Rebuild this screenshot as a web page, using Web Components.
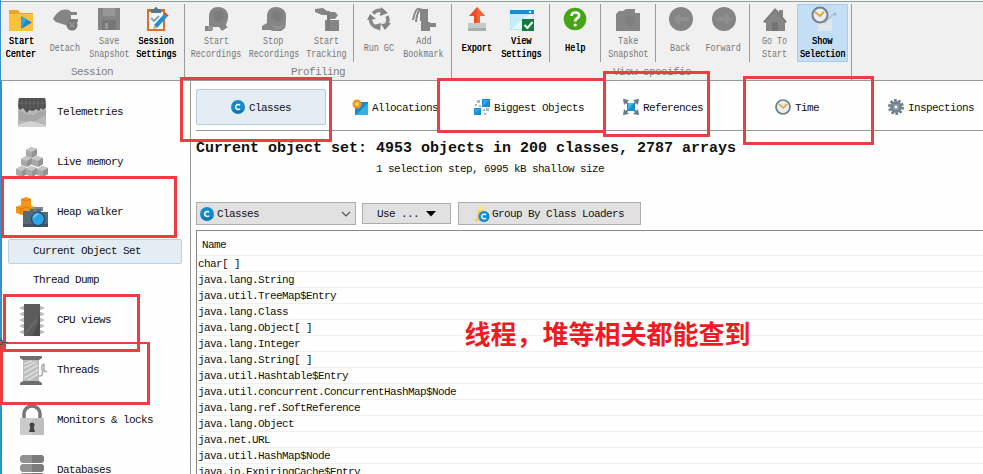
<!DOCTYPE html>
<html lang="en">
<head>
<meta charset="utf-8">
<title>Heap walker</title>
<style>
html,body{margin:0;height:474px;overflow:hidden;background:#fff}
body{font-family:"Liberation Mono",monospace;font-size:11px;letter-spacing:-.6px;color:#111}
</style>
</head>
<body>
<profiler-app></profiler-app>
<script>
const ICONS = {
folder:'<path d="M0 3h9l2 3h13v18H0z" fill="#e9a625"/><path d="M0 7h24v17H0z" fill="#fbc23c"/><path d="M12 9l11 6.5L12 22z" fill="#2484c9"/><path d="M12 9l5.5 3.2L12 22z" fill="#36a5df"/>',
detach:'<path d="M0 12c4-8 10-11 16-9l2 2h6v3h-6v4h7v3h-6l-3 4-7-2-6-2z" fill="#858585"/><circle cx="19" cy="18" r="5.5" fill="#777"/><path d="M16.500 15.500l5 5M21.500 15.500l-5 5" stroke="#999" stroke-width="1.500"/>',
save:'<path d="M1 1h22v22H1z" fill="#858585"/><path d="M6 1h12v8H6z" fill="#979797"/><path d="M5 13h14v10H5z" fill="#777"/><path d="M8 16h3v6H8z" fill="#999"/>',
settings:'<path d="M3 2h18v22H3z" fill="#d5702f"/><path d="M5 5h14v17H5z" fill="#f6fbff"/><path d="M7 2h3q2-4 4 0h3v4H7z" fill="#557787"/><path d="M7 11l3 3 5-5" stroke="#86a3b0" stroke-width="2" fill="none"/><path d="M10 18L20 7l3 3-10 11z" fill="#1d91d4"/><path d="M20 7l1.500-1.500 3 3L23 10z" fill="#d9413a"/><path d="M9 22l1-4 3 3z" fill="#e3aa5a"/>',
rec:'<path d="M5 10C5 3 9 0 14 0c7 0 11 5 10 11-.4 4-2 5-2 8l2 1-6 4-3-4H9l-1 4H1v-5h4z" fill="#858585"/><circle cx="15" cy="9" r="5.500" fill="#7d7d7d"/><path d="M4 19h5v4H4z" fill="#989898"/>',
stop:'<path d="M5 10C5 3 9 0 14 0c7 0 11 5 10 11-.4 4 0 7-1 10l-4 3h-8l-3-1H0v-4l5-3z" fill="#858585"/><circle cx="15" cy="9" r="5.500" fill="#7d7d7d"/><path d="M9 17q7 4 13 0l-2 5-7 1z" fill="#919191"/>',
track:'<path d="M0 2l8-1 4 3h3v4H7L0 5zM12 5h8l3 3-3 4h-8zM10 13h14v11H10z" fill="#858585"/><path d="M12 6h3v17h-3z" fill="#7b7b7b"/>',
gc:'<g fill="none" stroke="#898989" stroke-width="3.500"><path d="M6 6.500A9 9 0 0 1 16 4M20 9a9 9 0 0 1-2 10M11 21A9 9 0 0 1 3.500 11"/></g><path d="M14 0l7 6-8 3zM24 16l-6 7-4-6zM0 13l3-6 6 5zM7 18l7-2-1 8z" fill="#838383"/>',
bookmark:'<path d="M1 13Q4-2 9 3v11M4 15Q6-2 12 4" fill="none" stroke="#888" stroke-width="2"/><path d="M9 2h7v13h2v1h6v4h-6v4H9z" fill="#858585"/>',
export:'<path d="M3 16h18v8H3z" fill="#c4ccca"/><path d="M3 21h18v3H3z" fill="#a7b0b0"/><path d="M12 0l8 9h-5v7H9V9H4z" fill="#ee4b28"/><path d="M12 0l8 9h-5v7h-3z" fill="#f3653f"/>',
view:'<path d="M0 3h24v20H0z" fill="#b9e6f5"/><path d="M0 3h24v4H0z" fill="#168ed7"/><path d="M19 4h2v2h-2z" fill="#fff"/><path d="M1 8h22v14H1z" fill="#c7edf7"/><path d="M2 22L18 8h5v4L12 22z" fill="#e8f9fd"/><path d="M12 12h12v12H12z" fill="#137c3a"/><path d="M14.500 18l3 3 5-6" fill="none" stroke="#fff" stroke-width="2"/>',
help:'<circle cx="12" cy="12" r="11.300" fill="#46a514"/><path d="M8.500 9q.2-3.500 3.800-3.500c5 0 4.500 4.500 1.500 6-1.500.8-1.600 1.500-1.600 3" fill="none" stroke="#fff" stroke-width="2.700"/><circle cx="12.200" cy="18" r="1.600" fill="#fff"/>',
camera:'<path d="M0 7l3-3h4l3-2h9v4h5v18H0z" fill="#858585"/><circle cx="14" cy="14" r="5.500" fill="#808080"/>',
back:'<circle cx="12" cy="12" r="12" fill="#858585"/><path d="M4 12l7-6v4h9v4h-9v4z" fill="#8f8f8f"/>',
forward:'<circle cx="12" cy="12" r="12" fill="#858585"/><path d="M20 12l-7-6v4H4v4h9v4z" fill="#8f8f8f"/>',
home:'<path d="M0 15L12 1l4 4V3h4v7l4 5-2 1v8H3v-8z" fill="#858585"/><path d="M9 15h6v9H9z" fill="#747474"/><path d="M1 15L12 3l11 12" stroke="#7b7b7b" fill="none" stroke-width="1.500"/>',
show:'<path d="M7 10h14v14H7z" fill="#dfe7eb"/><path d="M13 16L23 7" stroke="#b8cad5" stroke-width="2"/><circle cx="24" cy="7" r="1.500" fill="#9fb9cc"/><circle cx="9" cy="8" r="7.500" fill="#e8eef0" stroke="#71808a" stroke-width="2"/><path d="M4 5l5 4 4-4" fill="none" stroke="#eda12d" stroke-width="1.800"/>',
telem:'<rect width="28" height="29" rx="2" fill="#b8b8b8"/><path d="M1 0h26l1 9-3 3-2-2-2 3-3-2-3 2-4-1-2 3-4-5-3 2-2-3z" fill="#505050"/><path d="M1 13q4 0 6 3 4 0 8 1l5-3 8-2v5L14 25 1 22z" fill="#a7a7a7"/><path d="M4 1v8M8 1v10M12 1v10M16 1v9M20 1v10M24 1v9M1 5h26" stroke="#737373" stroke-width=".7"/><path d="M1 26l12-3 14 4v2H1z" fill="#d3d3d3"/>',
memory:(()=>{let s='';for(const [x,y] of [[10,0],[5,9],[16,9],[0,19],[10,19],[21,19]])s+=`<path d="M${x} ${y+3}l5-3 6 2v6l-5 3-6-2z" fill="#a8a8a8"/><path d="M${x} ${y+3}l5-3 6 2-5 3z" fill="#c6c6c6"/><path d="M${x+6} ${y+5}l5-3v6l-5 3z" fill="#949494"/>`;return s})(),
heap:'<path d="M5 2l5-2 5 2v6l4 3v5l-5 2H6l-6-2v-6l5-2z" fill="#f7941a"/><path d="M5 2l5 2 5-2M0 10l5 2 5-2 5 2 4-2M5 12v5M15 12v5" stroke="#df7c0a" fill="none"/><path d="M7 14h7v-2h11v3h7v15H7z" fill="#526a79"/><path d="M19 14v-3h7v3" fill="none" stroke="#788991" stroke-width="2"/><path d="M7 27h25v3H7z" fill="#3f5360"/><circle cx="22" cy="22" r="7" fill="#23485c"/><circle cx="22" cy="22" r="5.900" fill="#2ba4ea"/><path d="M17.500 21q1-4 5-4" stroke="#69c8ef" stroke-width="2" fill="none"/>',
cpu:'<path d="M0 4l4-2h18l4 2-4 2H4zM0 10l4-2h18l4 2-4 2H4zM0 16l4-2h18l4 2-4 2H4zM0 22l4-2h18l4 2-4 2H4zM0 28l4-2h18l4 2-4 2H4z" fill="#bdbdbd"/><path d="M5 0h16v32H5z" fill="#5c5c5c"/><path d="M21 8v24h-8Q20 21 21 8z" fill="#4b4b4b"/><path d="M6 30L18 15" stroke="#6a6a6a" stroke-width="2"/>',
thread:'<path d="M0 0h22v2l-3 2H3L0 2zM3 25h16l3 2v2H0v-2z" fill="#707070"/><path d="M3 4h16v21H3z" fill="#bdbdbd"/><path d="M4 8l8-3M4 12l12-6M4 17l14-8M4 22l14-8M8 24l10-6" stroke="#dedede" stroke-width="1.500"/><path d="M19 20c8 1-1-11 5-12M24 8v7l3 1" fill="none" stroke="#aaa" stroke-width="1.500"/>',
lock:'<path d="M4 15V9a8 8 0 0 1 16 0v6" fill="none" stroke="#777" stroke-width="3.500"/><path d="M0 13h24v17H0z" fill="#cbcbcb"/><path d="M12 14h12v16H12z" fill="#bfbfbf"/><circle cx="12" cy="20" r="2.500" fill="#454545"/><path d="M11 20h2l2 7H9z" fill="#454545"/>',
db:'<path d="M0 2l2-2h20l2 2v4l-2 2H2L0 6zM0 11l2-2h20l2 2v4l-2 2H2l-2-2zM0 20l2-2h20l2 2v8H0z" fill="#929292"/><path d="M12 0h10l2 2v4l-2 2H12zM12 9h10l2 2v4l-2 2H12zM12 18h10l2 2v8H12z" fill="#7c7c7c"/>',
c:'<circle cx="8" cy="8" r="7" fill="#118dce"/><path d="M2 11a7 7 0 0 0 12 0" fill="#0c79b9"/><path d="M10 6.300a2.500 2.500 0 1 0 0 3.400" fill="none" stroke="#fff" stroke-width="1.600"/>',
alloc:'<path d="M3 3h13v13H3z" fill="#158dcf"/><path d="M4 16L16 4v12z" fill="#36afe5"/><circle cx="5" cy="5" r="4.500" fill="#e79921"/><circle cx="5" cy="5" r="2" fill="#ffcf73"/>',
big:'<path d="M8 0h8v8H8zM0 9h7v7H0z" fill="#148cce"/><path d="M9 1h6L9 7zM1 10h5l-5 5z" fill="#2ca9e1"/><path d="M3 1h3v3H3zM1 5h2v2H1zM5 6h2v2H5zM9 10h2v2H9zM12 9h3v3h-3zM10 14h2v2h-2z" fill="#a8b6bd"/>',
refs:'<path d="M1 1l14 14M15 1L1 15" stroke="#536773" stroke-width="1.700"/><path d="M0 0l6 1-5 5zM16 0l-1 6-5-5zM0 16l1-6 5 5zM16 16l-6-1 5-5z" fill="#667b87"/><path d="M4 4h8v8H4z" fill="#188fcd"/><path d="M5 4h6L5 11z" fill="#42b6e4"/>',
time:'<circle cx="8" cy="8" r="7" fill="#e8eff1" stroke="#6d7d86" stroke-width="1.700"/><path d="M4 5l4.500 4L12 5" fill="none" stroke="#e79d35" stroke-width="1.500"/>',
gear:'<circle cx="8" cy="8" r="6.700" fill="none" stroke="#6c7f8b" stroke-width="2.600" stroke-dasharray="2.600 1.610"/><circle cx="8" cy="8" r="4.500" fill="#b9c6cd" stroke="#6f828e" stroke-width="2.800"/><circle cx="8" cy="8" r="2.200" fill="#fff" stroke="#526470"/>',
loader:'<path d="M5 0h8q-2 2-2 6v9H1q3-2 3-5z" fill="#f5cf60"/><path d="M5 0h8l-2 4H5z" fill="#fbe399"/><circle cx="11" cy="10.500" r="5.500" fill="#168bce"/><path d="M13 9a2.400 2.400 0 1 0 0 3" fill="none" stroke="#fff" stroke-width="1.400"/>'
};
function define(name, render){
  customElements.define(name, class extends HTMLElement{
    constructor(){super();this.attachShadow({mode:'open'});}
    connectedCallback(){const a=n=>this.getAttribute(n)||'';this.shadowRoot.innerHTML=render(a);}
  });
}
define('ui-icon',a=>`<style>:host{display:block;flex:none;width:${a('w')||16}px;height:${a('h')||a('w')||16}px}svg{display:block;overflow:visible}</style><svg width="${a('w')||16}" height="${a('h')||a('w')||16}">${ICONS[a('name')]}</svg>`);

define('tool-button',a=>`<style>
:host{display:flex;flex-direction:column;align-items:center;flex:none;box-sizing:border-box;width:${a('w')}px;height:58px;padding-top:3px;color:#777;letter-spacing:0}
:host([on]){color:#000;text-shadow:.25px 0 #000}:host([sel]){background:#c3def5;box-shadow:inset 0 0 0 1px #a5cdf0}
:host([shift]){padding-left:2px}
.l{display:flex;flex-direction:column;justify-content:center;align-items:center;height:26px;margin-top:4px}
span{line-height:13px;white-space:nowrap;transform:scaleX(.765)}
</style><ui-icon name="${a('icon')}" w="24"></ui-icon><div class="l">${a('label').split('|').map(s=>`<span>${s}</span>`).join('')}</div>`);
define('tool-sep',a=>`<style>:host{display:block;flex:none;width:1px;height:${a('tall')?76:58}px;background:#9b9b9b}</style>`);
define('tool-gap',a=>`<style>:host{display:block;flex:none;width:${a('w')}px}</style>`);

define('tool-bar',()=>{
 const b=(w,icon,label,x='')=>`<tool-button w="${w}" icon="${icon}" label="${label}" ${x}></tool-button>`;
 const s='<tool-sep></tool-sep>',t='<tool-sep tall="1"></tool-sep>',g=w=>`<tool-gap w="${w}"></tool-gap>`;
 return `<style>:host{display:block;box-sizing:border-box;height:81px;background:#f0f0f0;border-top:1px solid #f7f7f7;border-bottom:1px solid #999;padding-left:2px}
 .r{display:flex;height:65px;padding-top:2px;border-top:1px solid #8f9d99;margin-left:-2px;padding-left:2px;align-items:flex-start}
 .g{display:grid;grid-template-columns:180px 272px 396px;height:11px;line-height:11px;margin-top:-2px;color:#808080;letter-spacing:-.6px}
 .g span{justify-self:center}</style>
 <div class="r">${b(38,'folder','Start|Center','on')}${b(50,'detach','Detach')}${b(38,'save','Save|Snapshot')}${b(56,'settings','Session|Settings','on')}${t}
 ${b(62,'rec','Start|Recordings')}${b(53,'stop','Stop|Recordings')}${b(53,'track','Start|Tracking')}${s}
 ${b(49,'gc','Run GC')}${b(41,'bookmark','Add|Bookmark')}${g(7)}${t}
 ${b(50,'export','Export','on')}${b(39,'view','View|Settings','on')}${g(8)}${s}${b(50,'help','Help','on')}${s}${b(54,'camera','Take|Snapshot')}${s}
 ${b(49,'back','Back')}${b(37,'forward','Forward')}${g(7)}${s}${b(47,'home','Go To|Start','shift')}${b(51,'show','Show|Selection','on sel')}${g(3)}${t}</div>
 <div class="g"><span>Session</span><span>Profiling</span><span>View specific</span></div>`});

define('side-item',a=>`<style>:host{display:grid;grid-template-columns:60px 1fr;align-items:center;height:50px;box-sizing:border-box}
ui-icon{justify-self:center}span{white-space:nowrap;margin-left:-5px}</style><ui-icon name="${a('icon')}" w="${a('w')}" h="${a('h')}"></ui-icon><span><slot></slot></span>`);
define('side-sub',()=>`<style>:host{display:block;box-sizing:border-box;height:25px;line-height:25px;margin:0 8px 0 6px;padding-left:25px}
:host([sel]){line-height:23px;padding-left:24px;background:#e4edf4;border:1px solid #bdd0dd;border-radius:2px}</style><slot></slot>`);
define('side-bar',()=>`<style>:host{display:flex;flex-direction:column;box-sizing:border-box;width:191px;flex:none;border-left:2px solid #318fcb;border-right:1px solid #999;padding-top:6px;overflow:hidden}
side-item{flex:none}side-sub{flex:none}side-sub[sel]{margin-top:2px}side-sub:not([sel]){margin-top:4px;margin-bottom:2px}</style>
<side-item icon="telem" w="28" h="29">Telemetries</side-item><side-item icon="memory" w="32" h="30">Live memory</side-item><side-item icon="heap" w="32" h="30">Heap walker</side-item>
<side-sub sel>Current Object Set</side-sub><side-sub>Thread Dump</side-sub>
<side-item icon="cpu" w="26" h="32">CPU views</side-item><side-item icon="thread" w="24" h="29">Threads</side-item><side-item icon="lock" w="24" h="30">Monitors &amp; locks</side-item><side-item icon="db" w="24" h="30">Databases</side-item>`);

define('view-tab',a=>`<style>:host{display:flex;flex:none;box-sizing:border-box;width:130px;height:36px;align-items:center;justify-content:center;gap:4px;white-space:nowrap;border:1px solid transparent;border-radius:2px}
:host([sel]){background:#e4edf4;border-color:#b9ccda;gap:3px;padding-right:1px}span{padding-top:2px}</style><ui-icon name="${a('icon')}"></ui-icon><span><slot></slot></span>`);
define('push-button',a=>`<style>:host{display:flex;box-sizing:border-box;align-items:center;height:${a('h')||23}px;width:${a('w')}px;background:#e1e1e1;border:1px solid #adadad;padding:1px ${a('pad')||4}px 0;gap:${a('gap')||3}px;white-space:nowrap}</style><slot></slot>`);
define('class-table',()=>{
 const rows=['char[ ]','java.lang.String','java.util.TreeMap$Entry','java.lang.Class','java.lang.Object[ ]','java.lang.Integer','java.lang.String[ ]','java.util.Hashtable$Entry','java.util.concurrent.ConcurrentHashMap$Node','java.lang.ref.SoftReference','java.lang.Object','java.net.URL','java.util.HashMap$Node','java.io.ExpiringCache$Entry'];
 return `<style>:host{display:block;height:243px;border:solid #888;border-width:1px 0 0 1px;overflow:hidden}
 .h{height:25px;line-height:29px;padding-left:5px;box-sizing:border-box;border-bottom:1px solid #eee}
 .r{height:16px;box-sizing:border-box;line-height:17px;padding-left:1px;border-bottom:1px solid #f0f0f0;white-space:pre}</style><div class="h">Name</div>${rows.map(r=>`<div class="r">${r}</div>`).join('')}`});
define('main-view',()=>`<style>:host{display:block;flex:1;min-width:0;padding:8px 0 0 5px;overflow:hidden}
.t{display:flex;gap:4px;height:41px;border-bottom:1px solid #999}
h1{margin:8px 0 0;font:bold 15px/20px "Liberation Mono",monospace;letter-spacing:0;white-space:nowrap}
p{margin:2px 0 0;width:588px;text-align:center;line-height:16px}
.b{display:flex;align-items:center;margin:25px 0 5px}.c1{margin-right:6px}.c2{margin-right:7px}.f{flex:1}svg{display:block}</style>
<div class="t"><view-tab icon="c" sel>Classes</view-tab><view-tab icon="alloc">Allocations</view-tab><view-tab icon="big">Biggest Objects</view-tab><view-tab icon="refs">References</view-tab><view-tab icon="time">Time</view-tab><view-tab icon="gear">Inspections</view-tab></div>
<h1>Current object set: 4953 objects in 200 classes, 2787 arrays</h1><p>1 selection step, 6995 kB shallow size</p>
<div class="b"><push-button class="c1" w="160" pad="2" gap="2"><ui-icon name="c"></ui-icon><span class="f">Classes</span><svg width="14" height="10"><path d="M3 3l4 4 4-4" fill="none" stroke="#555" stroke-width="1.200"/></svg></push-button>
<push-button class="c2" w="89" h="21" pad="14"><span>Use ...</span><svg width="20" height="8"><path d="M4 1h10L9 6.500z" fill="#000"/></svg></push-button>
<push-button w="183" pad="14"><ui-icon name="loader"></ui-icon><span>Group By Class Loaders</span></push-button></div><class-table></class-table>`);

define('mark-box',a=>{const [x,y,w,h]=a('at').split(' ');return `<style>:host{position:absolute;left:${x}px;top:${y}px;width:${w}px;height:${h}px;box-sizing:border-box;border:3px solid #ee3d40;border-top-width:${a('top')||3}px}</style>`});
define('mark-note',()=>`<style>:host{position:absolute;left:464.5px;top:314px;font:bold 26px/38px "Noto Sans CJK SC",sans-serif;letter-spacing:0;color:#ed1c24;white-space:nowrap}</style><slot></slot>`);
define('cross-cursor',()=>`<style>:host{position:absolute;left:0;top:338px}svg{display:block}</style><svg width="9" height="9"><path d="M0 2.500h2.500v4H0M2.500 4.500H8M1 0v2" fill="none" stroke="#40545c"/></svg>`);

define('profiler-app',()=>`<style>:host{display:block;position:relative;width:983px;height:474px;overflow:hidden;background:#fefefe}.m{display:flex;height:393px}.edge{position:absolute;left:0;top:0;width:1px;height:474px;background:linear-gradient(#3b8fcb 0 72%,#1c9fbc)}</style>
<tool-bar></tool-bar><div class="m"><side-bar></side-bar><main-view></main-view></div><div class="edge"></div>
<mark-box at="180 77 152 65"></mark-box><mark-box at="437 78 169 55"></mark-box><mark-box at="603 71 107 66"></mark-box><mark-box at="743 76 131 69"></mark-box>
<mark-box at="1 176 176 62"></mark-box><mark-box at="3 294 137 58"></mark-box><mark-box at="0 342 150 63" top="2"></mark-box>
<cross-cursor></cross-cursor><mark-note>线程，堆等相关都能查到</mark-note>`);
</script>
</body>
</html>
